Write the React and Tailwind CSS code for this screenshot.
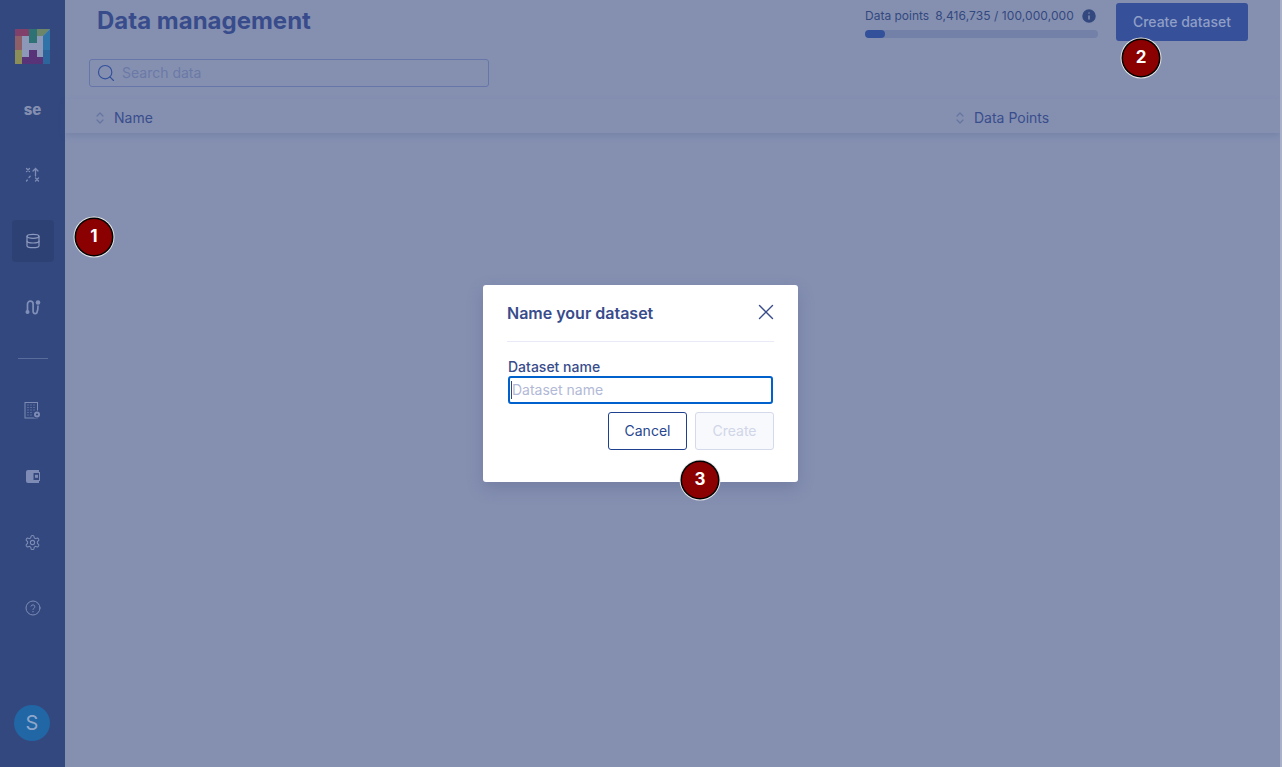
import { X, Search, Database, Info } from 'lucide-react';

const font = { fontFamily: 'Inter, "Liberation Sans", sans-serif' };

function Logo() {
  return (
    <svg width="35" height="35" viewBox="0 0 35 35" className="block">
      <rect width="35" height="35" fill="#8d97b8" />
      <path d="M0 0h14v7H0z" fill="#80406a" />
      <path d="M14 0h8v14h-8z" fill="#2f7276" />
      <path d="M22 0h13L28 7h-6z" fill="#6d8568" />
      <path d="M0 7h7v14H0z" fill="#8f5f68" />
      <path d="M0 21h7v14H0z" fill="#8c8e57" />
      <path d="M28 7l7-7v21h-7z" fill="#2f73a8" />
      <path d="M28 21h7v14h-7z" fill="#2c659c" />
      <path d="M7 28h7v-7h8v7h6v7H7z" fill="#593377" />
    </svg>
  );
}

function SortIcon() {
  return (
    <svg width="14" height="14" viewBox="0 0 14 14" fill="none" stroke="#66749f" strokeWidth="1.200" strokeLinecap="round" strokeLinejoin="round">
      <path d="M4 5l3-3 3 3M4 9l3 3 3-3" />
    </svg>
  );
}

function RouteIcon() {
  return (
    <svg width="16" height="17" viewBox="0 0 16 17" fill="none" stroke="#8190b8" strokeWidth="1.700" strokeLinecap="round">
      <path d="M2.500 11.500V5a2.800 2.800 0 0 1 5.600 0v7.500a2 2 0 0 0 4 0.200c.6-1 .9-3 .9-5.700" />
      <circle cx="2.500" cy="13" r="2" fill="#8190b8" stroke="none" />
      <circle cx="13" cy="3.500" r="2.300" fill="#8190b8" stroke="none" />
    </svg>
  );
}

function PlayIcon() {
  return (
    <svg width="16" height="16" viewBox="0 0 16 16" fill="none" stroke="#7e8cb5" strokeWidth="1.300" strokeLinecap="round">
      <path d="M1.500 1.500l3 3M4.500 1.500l-3 3M10.500 11l3 3M13.500 11l-3 3" />
      <path d="M10.500 9V1.500M8 4L10.500 1.500 13 4" />
      <path d="M1.500 14l.8-1M4 10.500l1.200-1.200" />
    </svg>
  );
}

function BuildingIcon() {
  return (
    <svg width="17" height="17" viewBox="0 0 17 17" fill="none">
      <rect x="1" y="0.500" width="12.500" height="15.500" stroke="#7e8cb5" strokeWidth="1" />
      <path d="M3.500 3h1M6.500 3h1M9.500 3h1M3.500 5.500h1M6.500 5.500h1M9.500 5.500h1M3.500 8h1M6.500 8h1M9.500 8h1M3.500 10.500h1M6.500 10.500h1M3.500 13h1M6.500 13h1" stroke="#7e8cb5" strokeWidth="1" />
      <circle cx="13" cy="12.500" r="4" fill="#33487f" />
      <circle cx="13" cy="12.500" r="3" fill="#7e8cb5" />
      <circle cx="13" cy="12.500" r="1.100" fill="#33487f" />
    </svg>
  );
}

function WalletIcon() {
  return (
    <svg width="15" height="15" viewBox="0 0 15 15" fill="none">
      <path d="M1 3A2 2 0 0 1 3 1h11v13H3a2 2 0 0 1-2-2z" fill="#7e8cb5" />
      <rect x="8.500" y="4" width="6" height="7" fill="#33487f" />
      <rect x="10" y="5.800" width="3" height="3" fill="#7e8cb5" />
      <rect x="14" y="3" width="1" height="9" fill="#7e8cb5" />
    </svg>
  );
}

function GearIcon() {
  return (
    <svg width="17" height="17" viewBox="0 0 24 24" fill="none" stroke="#7e8cb5" strokeWidth="1.500">
      <path d="M12.200 2h-.4a2 2 0 0 0-2 2v.200a2 2 0 0 1-1 1.700l-.400.300a2 2 0 0 1-2 0l-.200-.100a2 2 0 0 0-2.700.700l-.200.400a2 2 0 0 0 .700 2.700l.200.100a2 2 0 0 1 1 1.700v.600a2 2 0 0 1-1 1.700l-.200.100a2 2 0 0 0-.700 2.700l.200.400a2 2 0 0 0 2.700.700l.200-.100a2 2 0 0 1 2 0l.400.300a2 2 0 0 1 1 1.700v.200a2 2 0 0 0 2 2h.4a2 2 0 0 0 2-2v-.200a2 2 0 0 1 1-1.700l.400-.300a2 2 0 0 1 2 0l.200.100a2 2 0 0 0 2.700-.700l.200-.400a2 2 0 0 0-.700-2.700l-.200-.100a2 2 0 0 1-1-1.700v-.600a2 2 0 0 1 1-1.700l.200-.100a2 2 0 0 0 .700-2.700l-.200-.400a2 2 0 0 0-2.700-.700l-.200.100a2 2 0 0 1-2 0l-.400-.300a2 2 0 0 1-1-1.700V4a2 2 0 0 0-2-2z" />
      <circle cx="12" cy="12" r="3" />
    </svg>
  );
}

function HelpIcon() {
  return (
    <svg width="16" height="16" viewBox="0 0 24 24" fill="none" stroke="#7e8cb5" strokeWidth="1.500" strokeLinecap="round">
      <circle cx="12" cy="12" r="10.500" />
      <path d="M9 9.200a3 3 0 0 1 5.800 1c0 2-2.800 2.500-2.800 4" />
      <path d="M12 17.500h.01" strokeWidth="2" />
    </svg>
  );
}

function NavItem({ children, active }) {
  return (
    <div className={`w-[42px] h-[42px] rounded flex items-center justify-center ${active ? 'bg-[#2e4174]' : ''}`}>
      {children}
    </div>
  );
}

function Marker({ n, className }) {
  return (
    <div className={`absolute w-[36px] h-[36px] rounded-full bg-[#8b0000] shadow-[0_0_0_1.500px_#000,0_0_0_2.500px_#e8e8e8] text-white font-bold text-[17px] flex items-center justify-center ${className}`}>
      {n}
    </div>
  );
}

function SortHead({ label, className }) {
  return (
    <div className={`flex items-center gap-[7px] text-[14px] text-[#394d8c] ${className}`}>
      <SortIcon />
      {label}
    </div>
  );
}

export default function App() {
  return (
    <div className="relative h-[767px] w-[1282px] overflow-hidden flex bg-[#8590b1]" style={font}>
      <aside className="w-[65px] shrink-0 bg-[#33487f] flex flex-col items-center pt-[29px] pb-[26px]">
        <div className="mr-[1px]"><Logo /></div>
        <div className="mt-[25px] h-[42px] flex items-center justify-center text-[15px] font-extrabold text-[#8590b1]">se</div>
        <div className="mt-[23px] flex flex-col items-center gap-[24px]">
          <NavItem><PlayIcon /></NavItem>
          <NavItem active><Database size={16} strokeWidth={1.800} color="#8d9abf" /></NavItem>
          <NavItem><RouteIcon /></NavItem>
        </div>
        <div className="w-[30px] h-px bg-[#5a6c9c] mt-[30px] mb-[30px]" />
        <div className="flex flex-col items-center gap-[24px]">
          <NavItem><BuildingIcon /></NavItem>
          <NavItem><WalletIcon /></NavItem>
          <NavItem><GearIcon /></NavItem>
          <NavItem><HelpIcon /></NavItem>
        </div>
        <div className="mt-auto w-[36px] h-[36px] mr-[1px] rounded-full bg-[#2166a5] text-[#8fa6cb] text-[20px] flex items-center justify-center">S</div>
      </aside>

      <main className="flex-1 min-w-0 flex flex-col">
        <div className="flex items-start pl-[32px] pr-[32px] pt-[3px]">
          <h1 className="text-[24px] leading-[36px] font-bold text-[#384c8c]">Data management</h1>
          <div className="ml-auto mr-[18px] w-[233px] pt-[5px]">
            <div className="flex items-center text-[12px] leading-[15px] text-[#33487f]">
              <span className="mr-[6px]">Data points</span>
              <span className="tracking-[0.08px]">8,416,735 / 100,000,000</span>
              <Info size={18} className="ml-auto my-[-2px]" color="#8590b1" fill="#33487f" />
            </div>
            <div className="mt-[7px] h-[8px] rounded-full bg-[#7381a8]">
              <div className="h-[8px] w-[20px] rounded-full bg-[#33509a]" />
            </div>
          </div>
          <div className="w-[132px] h-[38px] pb-[1px] rounded-[3px] bg-[#36509a] text-[#8f9fc6] text-[14px] font-medium flex items-center justify-center">Create dataset</div>
        </div>

        <div className="ml-[24px] mt-[18px] w-[400px] h-[28px] pb-[1px] rounded-[3px] border border-[#6775a8] flex items-center pl-[6px] gap-[6px]">
          <Search size={20} strokeWidth={1.400} color="#33509a" />
          <span className="text-[14px] text-[#6b79a6]">Search data</span>
        </div>

        <div className="mt-[12px] h-[34px] pt-[3px] flex items-center pl-[28px] shadow-[0_3px_6px_rgba(70,85,140,0.22)]">
          <SortHead label="Name" className="w-[860px]" />
          <SortHead label="Data Points" />
        </div>
      </main>
      <div className="w-[2px] shrink-0 bg-[#a9b1c8]" />

      <div className="absolute left-[483px] top-[285px] w-[315px] h-[197px] rounded-[3px] bg-white px-[24px] shadow-[0_6px_16px_rgba(60,70,120,0.25)]">
        <div className="h-[57px] flex items-center justify-between border-b border-[#e8eaf8]">
          <span className="text-[16px] font-semibold text-[#384c8c]">Name your dataset</span>
          <X size={26} strokeWidth={1.300} color="#384c8c" className="mr-[-5px] mt-[-2px]" />
        </div>
        <div className="mt-[16px] pl-[1px] text-[14px] leading-[17px] font-medium text-[#384c8c]">Dataset name</div>
        <div className="mt-[1px] ml-[1px] w-[265px] h-[28px] pb-[1px] rounded-[3px] border-2 border-[#0060cc] flex items-center text-[14px] text-[#b2b9d6] pl-[1px]">
          <span className="w-px h-[18px] bg-[#33487f]" />
          Dataset name
        </div>
        <div className="mt-[8px] flex justify-end gap-[8px]">
          <div className="w-[79px] h-[38px] pb-[1px] rounded-[3px] border border-[#1f3f8f] text-[14px] text-[#274690] flex items-center justify-center">Cancel</div>
          <div className="w-[79px] h-[38px] pb-[1px] rounded-[3px] border border-[#d5daeb] bg-[#f8f9fd] text-[14px] text-[#d0d6e8] flex items-center justify-center">Create</div>
        </div>
      </div>

      <Marker n="1" className="left-[76px] top-[219px]" />
      <Marker n="2" className="left-[1123px] top-[40px]" />
      <Marker n="3" className="left-[682px] top-[462px]" />
    </div>
  );
}
